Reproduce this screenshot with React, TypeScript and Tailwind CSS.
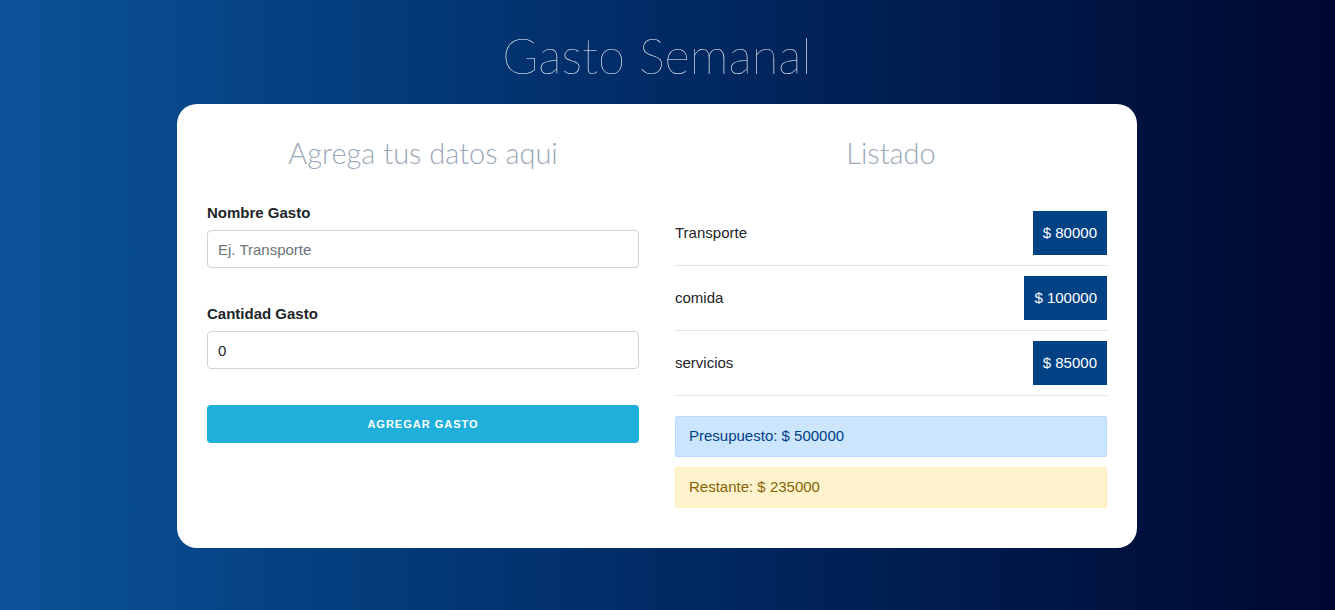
import React from 'react';

const gastos = [
  { nombre: 'Transporte', cantidad: 80000 },
  { nombre: 'comida', cantidad: 100000 },
  { nombre: 'servicios', cantidad: 85000 }
];

const thin = { fontFamily: 'Lato, "Open Sans", sans-serif' };

export default function App() {
  return (
    <div
      className="min-h-[610px] w-full bg-gradient-to-r from-[#0c5399] via-[#012a64] to-[#000830] pt-[24px] pb-[62px]"
      style={{ fontFamily: '"Liberation Sans", Arial, sans-serif' }}>

      <div className="w-[1314px]">
        <h1
          className="text-center text-[49px] leading-[62px] font-thin text-white mb-[18px]"
          style={thin}>
          Gasto Semanal
        </h1>

        <div className="mx-auto w-[960px] bg-white rounded-[20px] px-[30px] pt-[30px] pb-[40px] grid grid-cols-2 gap-x-[36px]">
          {/* formulario */}
          <div>
            <h2
              className="text-center text-[29px] leading-[38px] font-light text-[#9aa8b8] mb-[30px]"
              style={thin}>
              Agrega tus datos aqui
            </h2>
            <label className="block text-[15px] font-bold text-[#212529] leading-[22px] mb-[6px]">
              Nombre Gasto
            </label>
            <input
              type="text"
              placeholder="Ej. Transporte"
              className="block w-full h-[38px] border border-[#ced4da] rounded-[4px] px-[10px] text-[15px] text-[#212529] placeholder:text-[#6c757d] outline-none" />

            <label className="block text-[15px] font-bold text-[#212529] leading-[22px] mt-[35px] mb-[6px]">
              Cantidad Gasto
            </label>
            <input
              type="text"
              defaultValue="0"
              className="block w-full h-[38px] border border-[#ced4da] rounded-[4px] px-[10px] text-[15px] text-[#212529] outline-none" />

            <button className="mt-[36px] w-full h-[38px] rounded-[4px] bg-[#1fafdb] text-white text-[11px] font-bold tracking-[1px] uppercase">
              Agregar Gasto
            </button>
          </div>

          {/* listado */}
          <div>
            <h2
              className="text-center text-[29px] leading-[38px] font-light text-[#9aa8b8] mb-[29px]"
              style={thin}>
              Listado
            </h2>
            <ul>
              {gastos.map((g) =>
              <li
                key={g.nombre}
                className="flex items-center justify-between py-[10px] border-b border-[#dee2e6]">
                  <span className="text-[15px] text-[#212529]">{g.nombre}</span>
                  <span className="h-[44px] px-[10px] flex items-center bg-[#014285] text-white text-[15px]">
                    $ {g.cantidad}
                  </span>
                </li>
              )}
            </ul>
            <div className="mt-[20px] h-[41px] flex items-center px-[13px] bg-[#cce5ff] border border-[#b8daff] rounded-[2px] text-[#004085] text-[15px]">
              Presupuesto: $ 500000
            </div>
            <div className="mt-[10px] h-[41px] flex items-center px-[13px] bg-[#fff3cd] border border-[#ffeeba] rounded-[2px] text-[#856404] text-[15px]">
              Restante: $ 235000
            </div>
          </div>
        </div>
      </div>
    </div>
  );
}
